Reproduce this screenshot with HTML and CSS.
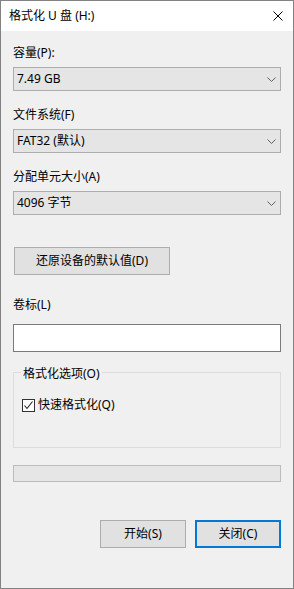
FILE: index.html
```html
<!DOCTYPE html>
<html lang="zh-CN">
<head>
    <meta charset="UTF-8">
    <title>格式化 U 盘 (H:)</title>
    <link rel="stylesheet" href="styles.css">
</head>
<body>
    <div class="window">
        <div class="titlebar">
            <span class="title">格式化 U 盘 (H:)</span>
            <svg class="close" width="10" height="10" viewBox="0 0 10 10">
                <path d="M0.5 0.5 L9.5 9.5 M9.5 0.5 L0.5 9.5" stroke="#000" stroke-width="1" fill="none"/>
            </svg>
        </div>

        <div class="content">
            <div class="label first">容量(P):</div>
            <div class="combo">
                <span>7.49 GB</span>
                <svg width="9" height="5" viewBox="0 0 9 5"><path d="M0.5 0.5 L4.5 4.5 L8.5 0.5" stroke="#606060" fill="none"/></svg>
            </div>

            <div class="label">文件系统(F)</div>
            <div class="combo">
                <span>FAT32 (默认)</span>
                <svg width="9" height="5" viewBox="0 0 9 5"><path d="M0.5 0.5 L4.5 4.5 L8.5 0.5" stroke="#606060" fill="none"/></svg>
            </div>

            <div class="label">分配单元大小(A)</div>
            <div class="combo">
                <span>4096 字节</span>
                <svg width="9" height="5" viewBox="0 0 9 5"><path d="M0.5 0.5 L4.5 4.5 L8.5 0.5" stroke="#606060" fill="none"/></svg>
            </div>

            <button class="btn restore">还原设备的默认值(D)</button>

            <div class="label volume">卷标(L)</div>
            <div class="textbox"></div>

            <fieldset class="options">
                <legend>格式化选项(O)</legend>
                <div class="check-row">
                    <span class="checkbox">
                        <svg width="11" height="11" viewBox="0 0 11 11"><path d="M1.5 5.5 L4 8.5 L9.5 1.5" stroke="#222" stroke-width="1.1" fill="none"/></svg>
                    </span>
                    <span>快速格式化(Q)</span>
                </div>
            </fieldset>

            <div class="progress"></div>

            <div class="actions">
                <button class="btn">开始(S)</button>
                <button class="btn default">关闭(C)</button>
            </div>
        </div>
    </div>
</body>
</html>
```

FILE: styles.css
```css
* {
    box-sizing: border-box;
}

body {
    margin: 0;
    font-family: "Noto Sans", "Noto Sans CJK SC", sans-serif;
    font-size: 12px;
    color: #000;
    background: #fff;
}

.window {
    width: 294px;
    height: 589px;
    border: 1px solid #838383;
    background: #f0f0f0;
    display: flex;
    flex-direction: column;
}

.titlebar {
    height: 30px;
    background: #fff;
    display: flex;
    align-items: center;
    justify-content: space-between;
    padding: 0 10px 0 8px;
    flex-shrink: 0;
}

.title {
    line-height: 16px;
}

.close {
    display: block;
}

.content {
    padding: 0 12px;
    display: flex;
    flex-direction: column;
}

.label {
    line-height: 16px;
    margin-top: 16px;
}

.label.first {
    margin-top: 14px;
}

.label.volume {
    margin-top: 22px;
}

.combo {
    margin-top: 6px;
    height: 24px;
    background: #e5e5e5;
    border: 1px solid #adadad;
    display: flex;
    align-items: center;
    justify-content: space-between;
    padding: 0 4px 0 3px;
    line-height: 16px;
}

.combo svg {
    display: block;
}

.btn {
    font-family: inherit;
    font-size: 12px;
    color: #000;
    background: #e1e1e1;
    border: 1px solid #adadad;
    height: 28px;
    width: 86px;
    padding: 0;
    line-height: 16px;
}

.btn.restore {
    margin-top: 32px;
    margin-left: 1px;
    width: 156px;
}

.btn.default {
    border: 2px solid #0078d7;
}

.textbox {
    margin-top: 11px;
    height: 28px;
    background: #fff;
    border: 1px solid #7a7a7a;
}

.options {
    margin: 10px 0 0;
    padding: 0 7px 34px;
    border: 1px solid #dcdcdc;
    min-width: 0;
}

.options legend {
    padding: 4px 2px 0;
    line-height: 16px;
}

.check-row {
    margin-top: 15px;
    display: flex;
    align-items: center;
    gap: 3px;
    line-height: 16px;
    margin-left: 1px;
}

.checkbox {
    width: 13px;
    height: 13px;
    border: 1px solid #333;
    background: #fff;
    display: flex;
    align-items: center;
    justify-content: center;
}

.progress {
    margin-top: 17px;
    height: 17px;
    background: #e6e6e6;
    border: 1px solid #bcbcbc;
}

.actions {
    margin-top: 38px;
    display: flex;
    justify-content: flex-end;
    gap: 9px;
}
```
